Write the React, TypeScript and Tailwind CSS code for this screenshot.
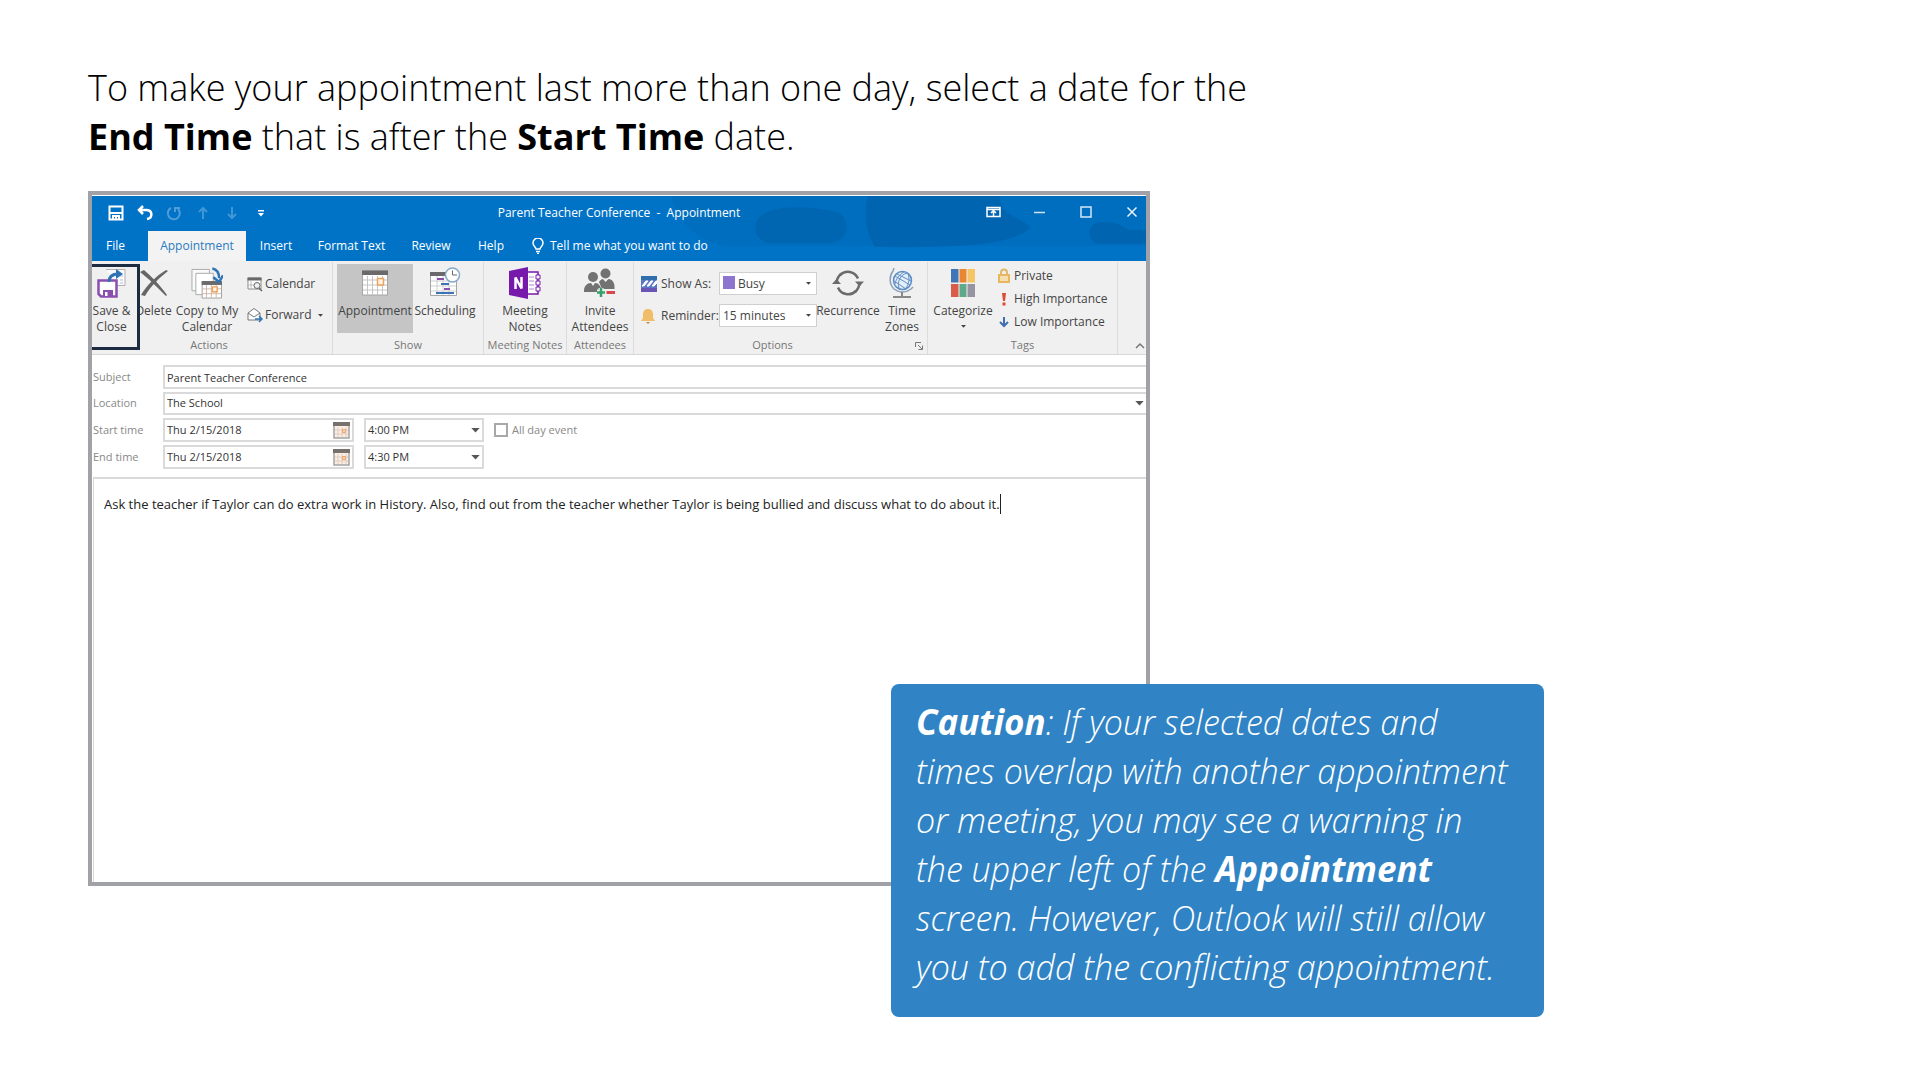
import { useState } from "react";
import type { ReactNode } from "react";

type GroupProps = {
  label: string;
  className: string;
  children: ReactNode;
};

// One ribbon section: controls on top, caption below
function Group({ label, className, children }: GroupProps) {
  return (
    <section className={`relative flex h-[92px] shrink-0 flex-col border-r border-[#dcdcdc] ${className}`}>
      <div className="flex h-[75px] items-start pt-[2px]">{children}</div>
      <div className="text-center text-[11px] leading-4 text-[#777777]">{label}</div>
    </section>
  );
}

type BigButtonProps = {
  lines: string[];
  icon: ReactNode;
  className: string;
};

function BigButton({ lines, icon, className }: BigButtonProps) {
  return (
    <button type="button" className={`flex shrink-0 flex-col items-center ${className}`}>
      <span className="flex h-8 w-8 items-center justify-center">{icon}</span>
      <span className="mt-1 flex flex-col items-center">
        {lines.map((line) => (
          <span key={line} className="whitespace-nowrap leading-4">
            {line}
          </span>
        ))}
      </span>
    </button>
  );
}

function Caret({ className = "" }: { className?: string }) {
  return (
    <svg width="10" height="6" viewBox="0 0 10 6" className={className} aria-hidden="true">
      <path d="M0 0h10L5 5.5z" fill="currentColor" />
    </svg>
  );
}

function CalendarGrid() {
  return (
    <svg width="28" height="28" viewBox="0 0 28 28" aria-hidden="true">
      <rect x="1.5" y="2" width="25" height="24" fill="#fff" stroke="#a5a5a5" />
      <rect x="1" y="1.5" width="26" height="4.5" fill="#6a6a6a" />
      <path d="M6.5 7v19M11.5 7v19M16.5 7v19M21.5 7v19M2 11h24M2 16h24M2 21h24" stroke="#c4c4c4" fill="none" />
      <rect x="16.5" y="9.5" width="6" height="6.5" fill="#fff3e6" stroke="#eea25c" strokeWidth="1.5" />
    </svg>
  );
}

function DateIcon() {
  return (
    <svg width="17" height="17" viewBox="0 0 17 17" aria-hidden="true">
      <path d="M1 1h15v15H1z" fill="#fbeee4" stroke="#a3a3a3" strokeWidth="1.5" />
      <path d="M0 0h17v4H0z" fill="#77706c" />
      <path d="M5 5v10M9 5v10M13 5v10M2 8h13M2 12h13" stroke="#e2cbbd" />
      <path d="M9.5 7.5h3v3h-3z" fill="#f8d3b0" stroke="#eca873" />
    </svg>
  );
}

function SaveCloseIcon() {
  return (
    <svg width="30" height="30" viewBox="0 0 30 30" aria-hidden="true">
      <path d="M9 1.5h19v16h-8" fill="#fafafa" stroke="#b0b0b0" />
      <path d="M23 8h3M23 12h3M23 15h3" stroke="#b5c3d6" />
      <path d="M1.5 12.5h18v16H4l-2.5-2.5z" fill="#fff" stroke="#8a4fae" strokeWidth="2.5" />
      <path d="M6 22h10v7H6z" fill="#8a4fae" />
      <path d="M8 24h2.5v4H8z" fill="#fff" />
      <path d="M12 14c0-6 4-8 9-8" stroke="#2f74b5" strokeWidth="3" fill="none" />
      <path d="M19 1l7 5-7 5z" fill="#2f74b5" />
    </svg>
  );
}

function DeleteIcon() {
  return (
    <svg width="30" height="28" viewBox="0 0 30 28" className="shrink-0" aria-hidden="true">
      <path d="M1 3l4-2c7 6 16 15 23 25l-1 1C19 19 9 9 1 3z" fill="#666" />
      <path d="M27 1l2 1C20 9 12 17 6 27l-4-1C8 16 17 7 27 1z" fill="#666" />
    </svg>
  );
}

function CopyIcon() {
  return (
    <svg width="33" height="33" viewBox="0 0 33 33" aria-hidden="true">
      <path d="M1 2h18v22H1z" fill="#fafafa" stroke="#a9a9a9" />
      <path d="M5 6h18v22H5z" fill="#fff" stroke="#a9a9a9" />
      <path d="M11.5 14.5h20v17h-20z" fill="#fff" stroke="#a0a0a0" />
      <path d="M11 14h21v4H11z" fill="#6a6a6a" />
      <path d="M16 18v13M21 18v13M26 18v13M12 22h19M12 27h19" stroke="#d3b9a6" />
      <path d="M22 20h5v5h-5z" fill="#fff3e6" stroke="#eea25c" strokeWidth="1.5" />
      <path d="M22 1c5 1 7 5 7 10" fill="none" stroke="#2f74b5" strokeWidth="2.5" />
      <path d="M23 10l6 5 4-7" fill="none" stroke="#2f74b5" strokeWidth="2.5" />
    </svg>
  );
}

function FindCalendarIcon() {
  return (
    <svg width="16" height="16" viewBox="0 0 16 16" aria-hidden="true">
      <path d="M1 2h13v11H1z" fill="#fff" stroke="#8a8a8a" />
      <path d="M.5 1.5h14v3H.5z" fill="#6a6a6a" />
      <path d="M4 5v8M1 9h6" stroke="#bbb" />
      <circle cx="10" cy="9.5" r="3" fill="#f0f0f0" stroke="#666" />
      <path d="M12 12l3 3" stroke="#666" strokeWidth="1.5" />
    </svg>
  );
}

function ForwardIcon() {
  return (
    <svg width="16" height="16" viewBox="0 0 16 16" aria-hidden="true">
      <path d="M1 6l6-4.5L13 6v7H1z" fill="#fff" stroke="#777" />
      <path d="M1 6l6 4 6-4" fill="none" stroke="#777" />
      <path d="M8 12h6M12 9l3 3-3 3" fill="none" stroke="#2f74b5" strokeWidth="1.5" />
    </svg>
  );
}

function SchedulingIcon() {
  return (
    <svg width="32" height="32" viewBox="0 0 32 32" aria-hidden="true">
      <path d="M1.5 5.5h26v23h-26z" fill="#fff" stroke="#a5a5a5" />
      <path d="M1 5h18v4H1z" fill="#6a6a6a" />
      <path d="M8 9v19M14 9v19M20 9v19M2 14h25M2 19h25M2 24h25" stroke="#cfcfcf" />
      <path d="M8 12h7M15 22h6" stroke="#8a4fae" strokeWidth="2" />
      <path d="M12 17h8M7 26h18" stroke="#3b73b9" strokeWidth="2" />
      <circle cx="23.5" cy="8" r="7" fill="#fff" stroke="#85a9cc" strokeWidth="1.5" />
      <path d="M23.5 3.5V8H28" fill="none" stroke="#666" />
    </svg>
  );
}

function OneNoteIcon() {
  return (
    <svg width="32" height="32" viewBox="0 0 32 32" aria-hidden="true">
      <path d="M17 5h12v22H17z" fill="#fff" stroke="#7719aa" strokeWidth="1.5" />
      <path d="M27 8h4v4h-4zM27 14h4v4h-4zM27 20h4v4h-4z" fill="#fff" stroke="#7719aa" />
      <path d="M20 10h5M20 14h5M20 18h5M20 22h5" stroke="#b684cf" />
      <path d="M0 4l19-4v32L0 28z" fill="#7719aa" />
      <path d="M6.5 22V10.5l6 11V10" fill="none" stroke="#fff" strokeWidth="2.5" />
    </svg>
  );
}

function AttendeesIcon() {
  return (
    <svg width="32" height="30" viewBox="0 0 32 30" aria-hidden="true">
      <g fill="#727272">
        <circle cx="9" cy="9" r="5" />
        <circle cx="21.5" cy="5.5" r="5" />
        <path d="M0 23c0-5 3-8 7-8l2 3 2-3c3 0 5 2 6 5l-4 4H0z" />
        <path d="M15 14c1-2 3-3 4-3l2.5 3 3-3c4 0 6 4 6 8v2H18z" />
      </g>
      <path d="M17 20v8M13 24h8" stroke="#f0f0f0" strokeWidth="5" />
      <path d="M17 20v9M13 24.5h8" stroke="#35a06b" strokeWidth="2.5" />
      <path d="M22.5 24.5H31" stroke="#d8474b" strokeWidth="3" />
    </svg>
  );
}

function ShowAsIcon() {
  return (
    <svg width="16" height="16" viewBox="0 0 16 16" aria-hidden="true">
      <path d="M0 0h16v5H0z" fill="#2f6fae" />
      <path d="M0 11h16v5H0z" fill="#6a55b5" />
      <path d="M0 4h16v8H0z" fill="#5b79c2" />
      <path d="M1 10l4-5h2l-4 5zM6 10l4-5h2l-4 5zM11 10l4-5h1v2l-3 3z" fill="#fff" stroke="#fff" />
    </svg>
  );
}

function BellIcon() {
  return (
    <svg width="14" height="16" viewBox="0 0 14 16" aria-hidden="true">
      <path d="M7 1c3 0 5 2 5 5v4l2 3H0l2-3V6c0-3 2-5 5-5z" fill="#f2bd68" />
      <path d="M5 14h4l-2 2z" fill="#b58b4a" />
    </svg>
  );
}

function RecurrenceIcon() {
  return (
    <svg width="32" height="28" viewBox="0 0 32 28" aria-hidden="true">
      <path d="M6 18.5a11 11 0 0 0 18 3.5M26 9.5A11 11 0 0 0 8 6" fill="none" stroke="#6b6b6b" strokeWidth="2.5" />
      <path d="M9 5C6 7.5 4.5 11 4.5 15M23 23c3-2.5 4.500-6 4.500-10" fill="none" stroke="#6b6b6b" strokeWidth="2.5" />
      <path d="M0 15l4.500-5L9 15zM23 12.500l4.500 5 4.500-5z" fill="#6b6b6b" />
    </svg>
  );
}

function GlobeIcon() {
  return (
    <svg width="26" height="32" viewBox="0 0 26 32" aria-hidden="true">
      <circle cx="13.5" cy="13.5" r="9" fill="#e4eef8" stroke="#5e8fc4" strokeWidth="1.5" />
      <path d="M6 9l15 9M8 7l14 7M5 14l12 8M10 21c-2-6 1-13 8-15M16 22c4-4 5-10 3-15M6 17c1-5 4-9 9-12" fill="none" stroke="#5e8fc4" />
      <path d="M5 1l-1 3C0 9 0 17 5 22c5 4 12 4 17 0l2-2" fill="none" stroke="#8aa0b8" strokeWidth="1.5" />
      <path d="M13 25v4M4 30h18" stroke="#888" strokeWidth="2" />
    </svg>
  );
}

function CategorizeIcon() {
  return (
    <svg width="24" height="28" viewBox="0 0 24 28" aria-hidden="true">
      <path d="M0 0h7.500v13.500H0z" fill="#3f76b8" />
      <path d="M8.500 0h7v13.500h-7z" fill="#e98634" />
      <path d="M16.500 0H24v13.500h-7.500z" fill="#f3c567" />
      <path d="M0 15h7.500v13H0z" fill="#dc5a4a" />
      <path d="M8.500 15h7v13h-7z" fill="#5fa98b" />
      <path d="M16.500 15H24v13h-7.500z" fill="#9693a3" />
    </svg>
  );
}

function LockIcon() {
  return (
    <svg width="12" height="16" viewBox="0 0 12 16" aria-hidden="true">
      <path d="M3 7V4.500a3 3 0 0 1 6 0V7" fill="none" stroke="#e0b868" strokeWidth="2" />
      <path d="M1 7h10v7H1z" fill="#f6dfae" stroke="#e8b861" strokeWidth="2" />
    </svg>
  );
}

function ImportanceIcon() {
  return (
    <svg width="12" height="16" viewBox="0 0 12 16" aria-hidden="true">
      <path d="M4 2h4l-1 8H5zM4.500 11.500h3v3h-3z" fill="#dc4b32" />
    </svg>
  );
}

function LowIcon() {
  return (
    <svg width="12" height="16" viewBox="0 0 12 16" aria-hidden="true">
      <path d="M6 3v8M2 8l4 4 4-4" fill="none" stroke="#3f6fb0" strokeWidth="2" />
    </svg>
  );
}

function QuickAccess() {
  return (
    <div className="flex items-center gap-[13px] pl-4">
      <button type="button" aria-label="Save">
        <svg width="16" height="16" viewBox="0 0 16 16" fill="none" stroke="#fff" strokeWidth="2">
          <path d="M1.500 1.500h13v13h-13zM2 8h12" />
          <path d="M5 15v-4h6v4M8 12v3" />
        </svg>
      </button>
      <button type="button" aria-label="Undo">
        <svg width="16" height="16" viewBox="0 0 16 16" fill="none" stroke="#fff" strokeWidth="2.5">
          <path d="M6 1L2 5l4 4M2 5h7c7 0 7 8 1 9" />
        </svg>
      </button>
      <button type="button" aria-label="Redo" className="opacity-30">
        <svg width="16" height="16" viewBox="0 0 16 16" fill="none" stroke="#fff" strokeWidth="2">
          <path d="M5 3a6 6 0 1 0 7 1M9 7V3h5" />
        </svg>
      </button>
      <button type="button" aria-label="Previous item" className="opacity-25">
        <svg width="16" height="16" viewBox="0 0 16 16" fill="none" stroke="#fff" strokeWidth="2">
          <path d="M8 14V3M4 7l4-4 4 4" />
        </svg>
      </button>
      <button type="button" aria-label="Next item" className="opacity-25">
        <svg width="16" height="16" viewBox="0 0 16 16" fill="none" stroke="#fff" strokeWidth="2">
          <path d="M8 2v11M4 9l4 4 4-4" />
        </svg>
      </button>
      <button type="button" aria-label="Customize toolbar" className="pl-0.5">
        <svg width="12" height="16" viewBox="0 0 12 16" fill="#fff">
          <path d="M3 5h6v1.500H3zM3 8h6l-3 3.500z" />
        </svg>
      </button>
    </div>
  );
}

function WindowControls() {
  return (
    <div className="flex items-center gap-[30px] pr-1.5 pb-[3px]">
      <button type="button" aria-label="Ribbon display options">
        <svg width="16" height="16" viewBox="0 0 16 16" fill="none" stroke="#fff" strokeWidth="1.5">
          <path d="M1 3.500h13v9H1zM1 5.500h13M7.500 12V7M5 9l2.500-2.500L10 9" />
        </svg>
      </button>
      <button type="button" aria-label="Minimize">
        <svg width="16" height="16" viewBox="0 0 16 16" fill="none" stroke="#cfe4f6" strokeWidth="1.5">
          <path d="M2 8.500h11" />
        </svg>
      </button>
      <button type="button" aria-label="Maximize">
        <svg width="16" height="16" viewBox="0 0 16 16" fill="none" stroke="#d5e8f8" strokeWidth="1.5">
          <path d="M3 3h10v10H3z" />
        </svg>
      </button>
      <button type="button" aria-label="Close">
        <svg width="16" height="16" viewBox="0 0 16 16" fill="none" stroke="#e8f3fc" strokeWidth="1.5">
          <path d="M3.500 3.500l9 9M12.500 3.500l-9 9" />
        </svg>
      </button>
    </div>
  );
}

function TitleBar() {
  return (
    <header className="relative bg-[#0173c7] text-[12px] text-white">
      {/* Cloud artwork behind the caption */}
      <svg className="absolute inset-y-0 right-0 h-full w-[500px]" viewBox="0 0 500 65" preserveAspectRatio="none" aria-hidden="true">
        <path d="M25 0h475v50H80C50 46 30 22 25 0z" fill="#0069b8" opacity=".5" />
        <path d="M115 20c15-12 50-10 75-4 15 5 15 28-4 31h-65c-14-5-15-20-6-27z" fill="#0061aa" opacity=".6" />
        <path d="M222 0h132c-2 20 25 22 30 32-18 16-60 20-155 19-9-15-12-32-7-51z" fill="#0060a9" opacity=".7" />
        <path d="M448 28c15-5 26 0 34 6h18v14h-50c-8-5-9-14-2-20z" fill="#0060a9" opacity=".7" />
      </svg>
      <div className="relative grid h-[34px] grid-cols-[1fr_auto_1fr] items-center">
        <QuickAccess />
        <h1 className="whitespace-pre">Parent Teacher Conference  -  Appointment</h1>
        <div className="flex justify-end">
          <WindowControls />
        </div>
      </div>
      <nav className="relative flex h-[31px] items-end leading-[30px]">
        <a href="#file" className="w-14 pl-3.5">File</a>
        <a href="#appointment" className="w-[98px] bg-[#f3f3f3] text-center text-[#2b7cc0]">Appointment</a>
        <a href="#insert" className="w-[60px] text-center">Insert</a>
        <a href="#format" className="w-[91px] text-center">Format Text</a>
        <a href="#review" className="w-[68px] text-center">Review</a>
        <a href="#help" className="w-[52px] text-center">Help</a>
        <button type="button" className="ml-[15px] flex items-center gap-1.5">
          <svg width="12" height="16" viewBox="0 0 12 16" fill="none" stroke="#fff" strokeWidth="1.5" aria-hidden="true">
            <path d="M4 11c0-2-3-3-3-6a5 5 0 0 1 10 0c0 3-3 4-3 6zM4 13.500h4M5 15.500h2" />
          </svg>
          Tell me what you want to do
        </button>
      </nav>
    </header>
  );
}

function Ribbon() {
  return (
    <div className="flex border-b border-[#d8d8d8] bg-[#f0f0f0] pt-px text-[12px] text-[#444444]">
      <Group label="Actions" className="w-[241px] pr-1.5">
        <BigButton
          lines={["Save &", "Close"]}
          icon={<SaveCloseIcon />}
          className="relative z-10 h-[86px] w-12 border-[3px] border-l-0 border-[#1c2b40] bg-[#f0f0f0] pr-1.5"
        />
        <BigButton lines={["Delete"]} icon={<DeleteIcon />} className="w-[27px] pt-[3px]" />
        <BigButton lines={["Copy to My", "Calendar"]} icon={<CopyIcon />} className="w-20 pt-[3px]" />
        <div className="flex flex-col gap-[15px] pt-3">
          <button type="button" className="flex items-center gap-0.5 leading-4">
            <FindCalendarIcon />
            Calendar
          </button>
          <button type="button" className="flex items-center gap-0.5 leading-4">
            <ForwardIcon />
            Forward
            <Caret className="ml-1 h-[3px] w-[5px]" />
          </button>
        </div>
      </Group>

      <Group label="Show" className="w-[151px]">
        <BigButton lines={["Appointment"]} icon={<CalendarGrid />} className="ml-1 h-[69px] w-[76px] bg-[#c5c5c5] pt-[3px]" />
        <BigButton lines={["Scheduling"]} icon={<SchedulingIcon />} className="w-[64px] pt-[3px]" />
      </Group>

      <Group label="Meeting Notes" className="w-[83px]">
        <BigButton lines={["Meeting", "Notes"]} icon={<OneNoteIcon />} className="w-full pt-[3px]" />
      </Group>

      <Group label="Attendees" className="w-[67px]">
        <BigButton lines={["Invite", "Attendees"]} icon={<AttendeesIcon />} className="w-full pt-[3px]" />
      </Group>

      <Group label="Options" className="w-[294px] pr-4">
        <div className="ml-[7px] grid w-[176px] shrink-0 grid-cols-[18px_60px_98px] items-center gap-y-[9px] pt-2">
          <ShowAsIcon />
          <label htmlFor="show-as" className="pl-0.5">Show As:</label>
          <div className="relative">
            <select id="show-as" defaultValue="Busy" className="h-[23px] w-full appearance-none border border-[#cfcfcf] bg-white pl-[18px]">
              <option>Busy</option>
              <option>Free</option>
            </select>
            <span className="pointer-events-none absolute top-1 left-1 h-[13px] w-3 bg-[#8d75cf]" />
            <Caret className="pointer-events-none absolute top-2.5 right-1.5 h-[3px] w-[5px]" />
          </div>
          <BellIcon />
          <label htmlFor="reminder" className="pl-0.5">Reminder:</label>
          <div className="relative">
            <select id="reminder" defaultValue="15 minutes" className="h-[23px] w-full appearance-none border border-[#cfcfcf] bg-white pl-[3px]">
              <option>15 minutes</option>
              <option>30 minutes</option>
            </select>
            <Caret className="pointer-events-none absolute top-2.5 right-1.5 h-[3px] w-[5px]" />
          </div>
        </div>
        <BigButton lines={["Recurrence"]} icon={<RecurrenceIcon />} className="w-[62px] pt-[3px]" />
        <BigButton lines={["Time", "Zones"]} icon={<GlobeIcon />} className="w-[46px] pt-[3px]" />
        <svg className="absolute right-1 bottom-1 text-[#777777]" width="8" height="8" viewBox="0 0 8 8" fill="none" stroke="currentColor" aria-hidden="true">
          <path d="M.5 5V.5H6M3 3l4 4M7.500 3.500v4h-4" />
        </svg>
      </Group>

      <Group label="Tags" className="w-[190px]">
        <div>
          <BigButton lines={["Categorize"]} icon={<CategorizeIcon />} className="w-[70px] pt-[3px]" />
          <Caret className="mx-auto mt-1.5 h-[3px] w-[5px]" />
        </div>
        <div className="flex flex-col gap-[7px] pt-1">
          <button type="button" className="flex items-center gap-1 leading-4">
            <LockIcon />
            Private
          </button>
          <button type="button" className="flex items-center gap-1 leading-4">
            <ImportanceIcon />
            High Importance
          </button>
          <button type="button" className="flex items-center gap-1 leading-4">
            <LowIcon />
            Low Importance
          </button>
        </div>
      </Group>

      <button type="button" aria-label="Collapse ribbon" className="ml-auto self-end pr-px pb-1">
        <svg width="10" height="8" viewBox="0 0 10 8" fill="none" stroke="#777" strokeWidth="1.5">
          <path d="M1 6l4-4 4 4" />
        </svg>
      </button>
    </div>
  );
}

type DateRowProps = {
  id: string;
  label: string;
  time: string;
  children?: ReactNode;
};

function DateRow({ id, label, time, children }: DateRowProps) {
  return (
    <div className="flex items-center">
      <label htmlFor={id} className="w-[70px] text-[#888888]">{label}</label>
      <div className="flex h-6 w-[191px] items-center border-2 border-[#dadada] bg-white pr-0.5">
        <input id={id} defaultValue="Thu 2/15/2018" className="min-w-0 flex-1 pl-0.5 outline-none" />
        <DateIcon />
      </div>
      <div className="relative ml-2.5 w-[120px]">
        <select aria-label={`${label} hour`} defaultValue={time} className="h-6 w-full appearance-none border-2 border-[#dadada] bg-white pl-0.5">
          <option>4:00 PM</option>
          <option>4:30 PM</option>
        </select>
        <Caret className="pointer-events-none absolute top-2.5 right-1 h-[5px] w-[9px] text-[#555555]" />
      </div>
      {children}
    </div>
  );
}

function AppointmentForm() {
  const [allDay, setAllDay] = useState(false);

  return (
    <form className="flex flex-col gap-[3px] pt-[10px] pl-px text-[11px] text-[#333333]">
      <div className="flex items-center">
        <label htmlFor="subject" className="w-[70px] text-[#888888]">Subject</label>
        <input
          id="subject"
          defaultValue="Parent Teacher Conference"
          className="h-6 flex-1 border-2 border-r-0 border-[#dadada] bg-white pl-0.5 outline-none"
        />
      </div>
      <div className="flex items-center">
        <label htmlFor="location" className="w-[70px] text-[#888888]">Location</label>
        <div className="flex h-[23px] flex-1 items-center border-2 border-r-0 border-[#dadada] bg-white pr-0.5">
          <input id="location" defaultValue="The School" className="min-w-0 flex-1 pl-0.5 outline-none" />
          <Caret className="h-[5px] w-[9px] text-[#555555]" />
        </div>
      </div>
      <DateRow id="start" label="Start time" time="4:00 PM">
        <label className="ml-2.5 flex items-center gap-1 text-[#888888]">
          <input
            type="checkbox"
            checked={allDay}
            onChange={(e) => setAllDay(e.target.checked)}
            className="h-3.5 w-3.5 appearance-none border-2 border-[#a8a8a8] bg-white checked:bg-[#0173c7]"
          />
          All day event
        </label>
      </DateRow>
      <DateRow id="end" label="End time" time="4:30 PM" />
      <div className="mt-[5px] flex h-[405px] items-start border-t-2 border-l border-[#dadada] pt-[15px] pl-2.5 text-[13px]">
        <textarea
          aria-label="Notes"
          rows={1}
          className="field-sizing-content resize-none leading-5 text-[#222222] outline-none"
          defaultValue="Ask the teacher if Taylor can do extra work in History. Also, find out from the teacher whether Taylor is being bullied and discuss what to do about it."
        />
        <span className="h-5 w-px bg-[#222222]" />
      </div>
    </form>
  );
}

export default function App() {
  return (
    <main className="min-h-screen bg-white px-[88px] pt-[63px] pb-16 font-['Open_Sans','Noto_Sans',sans-serif]">
      <p className="max-w-[1200px] text-[36px] leading-[49px] font-light text-black">
        To make your appointment last more than one day, select a date for the{" "}
        <strong className="font-bold">End Time</strong> that is after the{" "}
        <strong className="font-bold">Start Time</strong> date.
      </p>

      <div className="relative mt-[30px] max-w-[1456px]">
        <div className="w-full max-w-[1062px] overflow-hidden border-4 border-[#a1a2a8] pt-px">
          <TitleBar />
          <Ribbon />
          <AppointmentForm />
        </div>

        {/* Caution note hangs over the lower right corner of the window */}
        <aside className="absolute right-0 -bottom-[131px] w-[653px] rounded-lg bg-[#3084c5] pt-[14px] pr-8 pb-[25px] pl-[25px] text-[34px] leading-[49px] font-light text-white italic">
          <strong className="text-[35px] leading-none font-bold">Caution</strong>: If your selected dates and times
          overlap with another appointment or meeting, you may see a warning in the upper left of the{" "}
          <strong className="text-[35px] leading-none font-bold">Appointment</strong> screen. However, Outlook will
          still allow you to add the conflicting appointment.
        </aside>
      </div>
    </main>
  );
}
